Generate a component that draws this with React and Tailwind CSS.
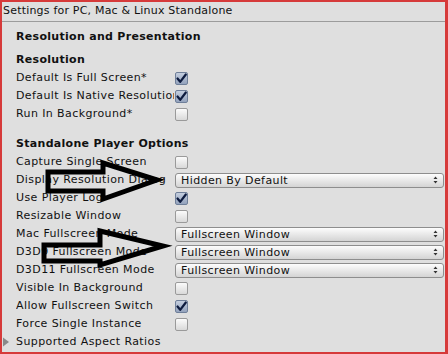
import React from "react";

function CheckBox({ checked }) {
  if (checked) {
    return (
      <div className="w-[13px] h-[13px] rounded-[2px] border border-[#6f7f99] bg-gradient-to-b from-[#c4cede] to-[#94a3bd] flex items-center justify-center">
        <svg width="11" height="11" viewBox="0 0 11 11">
          <path d="M1.5 5.5 L4.2 8.8 L9.8 1.5" fill="none" stroke="#0d1b3e" strokeWidth="2.2" strokeLinecap="round" strokeLinejoin="round" />
        </svg>
      </div>
    );
  }
  return <div className="w-[13px] h-[13px] rounded-[2px] border border-[#9a9a9a] bg-gradient-to-b from-[#fbfbfb] to-[#d9d9d9]" />;
}

function Dropdown({ value }) {
  return (
    <div className="w-[269px] h-[15px] rounded-[3px] border border-[#8e8e8e] bg-gradient-to-b from-[#fdfdfd] to-[#d4d4d4] flex items-center justify-between pl-[5px] pr-[5px]">
      <span className="text-[11px] leading-none tracking-[0.4px]">{value}</span>
      <svg width="5" height="8" viewBox="0 0 5 8">
        <path d="M2.5 0.5 L4.5 3 L0.5 3 Z M0.5 5 L4.5 5 L2.5 7.5 Z" fill="#333" />
      </svg>
    </div>
  );
}

function Row({ label, children }) {
  return (
    <div className="h-[18px] flex items-center pl-[14px]">
      <div className="w-[158px] overflow-hidden whitespace-nowrap text-[11px] tracking-[0.4px]">{label}</div>
      <div className="pl-[1px]">{children}</div>
    </div>
  );
}

export default function App() {
  return (
    <div className="relative w-[448px] h-[354px] overflow-hidden border-2 border-r-[3px] border-[#d63a3a] bg-[#dfdfdf] text-[#111] font-['DejaVu_Sans',sans-serif]">
      {/* title bar */}
      <div className="h-[20px] flex items-center pl-[1px] border-b border-[#9c9c9c] text-[11px] tracking-[0.2px]">
        Settings for PC, Mac &amp; Linux Standalone
      </div>

      <div className="pt-[6px]">
        <div className="h-[18px] flex items-center pl-[14px] text-[11px] font-bold tracking-[0.3px]">Resolution and Presentation</div>
        <div className="h-[18px] mt-[5px] flex items-center pl-[14px] text-[11px] font-bold tracking-[0.3px]">Resolution</div>
        <Row label="Default Is Full Screen*"><CheckBox checked /></Row>
        <Row label="Default Is Native Resolution"><CheckBox checked /></Row>
        <Row label="Run In Background*"><CheckBox /></Row>

        <div className="h-[18px] mt-[12px] flex items-center pl-[14px] text-[11px] font-bold tracking-[0.3px]">Standalone Player Options</div>
        <Row label="Capture Single Screen"><CheckBox /></Row>
        <Row label="Display Resolution Dialog"><Dropdown value="Hidden By Default" /></Row>
        <Row label="Use Player Log"><CheckBox checked /></Row>
        <Row label="Resizable Window"><CheckBox /></Row>
        <Row label="Mac Fullscreen Mode"><Dropdown value="Fullscreen Window" /></Row>
        <Row label="D3D9 Fullscreen Mode"><Dropdown value="Fullscreen Window" /></Row>
        <Row label="D3D11 Fullscreen Mode"><Dropdown value="Fullscreen Window" /></Row>
        <Row label="Visible In Background"><CheckBox /></Row>
        <Row label="Allow Fullscreen Switch"><CheckBox checked /></Row>
        <Row label="Force Single Instance"><CheckBox /></Row>
        <div className="h-[18px] flex items-center text-[11px] tracking-[0.4px]">
          <svg width="14" height="10" viewBox="0 0 14 10" className="shrink-0">
            <path d="M1 0.5 L7 5 L1 9.5 Z" fill="#8a8a8a" />
          </svg>
          <span>Supported Aspect Ratios</span>
        </div>
      </div>

      {/* hand-drawn arrows over the panel */}
      <svg className="absolute left-[-2px] top-[-2px]" width="448" height="354" viewBox="0 0 448 354">
        <polygon points="48,172 103,172 103,163 157,180 103,199 103,191 48,191" fill="none" stroke="#000" strokeWidth="5" />
        <polygon points="44,245 100,245 100,231 163,246 100,265 100,261 44,261" fill="none" stroke="#000" strokeWidth="5" />
      </svg>
    </div>
  );
}
